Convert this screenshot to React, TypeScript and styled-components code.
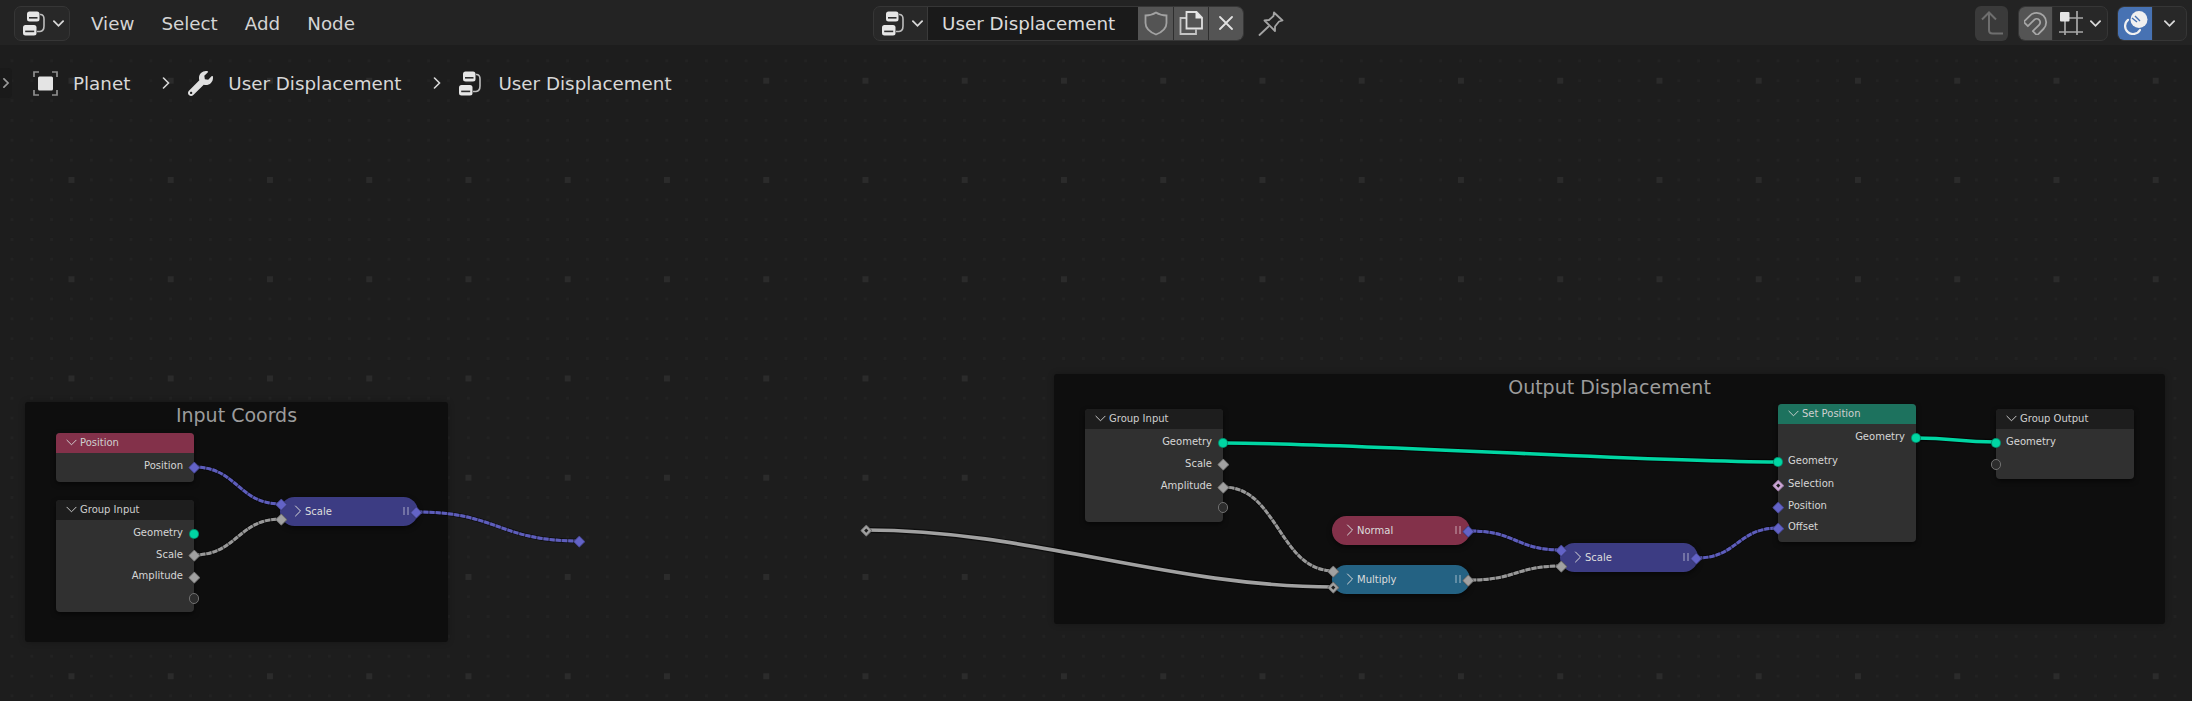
import React, { FunctionComponent } from 'react'
import styled, { createGlobalStyle } from 'styled-components'
import { FaWrench } from 'react-icons/fa'

const GlobalStyle = createGlobalStyle`
  * {
    box-sizing: border-box;
  }
  html, body, #root {
    margin: 0;
    height: 100%;
    background: #1d1d1d;
  }
  body {
    font-family: "DejaVu Sans", "Liberation Sans", sans-serif;
    overflow: hidden;
  }
`

const HEADER_HEIGHT = 45

const Editor = styled.div`
  display: flex;
  flex-direction: column;
  height: 701px;
  width: 2192px;
  overflow: hidden;
`

/* ---- top bar ---- */

const Header = styled.header`
  flex: 0 0 ${HEADER_HEIGHT}px;
  display: flex;
  align-items: center;
  padding: 1px 5px 0 14px;
  background: #232323;
  color: #d4d4d4;
  font-size: 18.3px;
`

const LeftSection = styled.div`
  flex: 0 0 859px;
  display: flex;
  align-items: center;
`

const RightSection = styled.div`
  margin-left: auto;
  display: flex;
  align-items: center;
  gap: 9px;
`

const Group = styled.div`
  display: flex;
  align-items: stretch;
  height: 35px;
  border: 1px solid #363636;
  border-radius: 7px;
  background: #282828;
  overflow: hidden;
`

const EditorType = styled(Group)`
  flex: 0 0 56px;
  align-items: center;
  padding-left: 8px;
  gap: 6px;
`

const Menu = styled.nav`
  display: flex;
  gap: 27px;
  margin-left: 21px;
`

const TreeSelect = styled.div`
  display: flex;
  align-items: center;
  gap: 6px;
  padding-left: 8px;
  width: 54px;
  border-right: 1px solid #3a3a3a;
`

const NameField = styled.div`
  width: 210px;
  padding-left: 14px;
  display: flex;
  align-items: center;
  background: #1a1a1a;
  color: #dcdcdc;
`

const ToolButton = styled.div<{ $bg?: string; $w?: number }>`
  flex: 0 0 ${p => p.$w ?? 35}px;
  display: flex;
  align-items: center;
  justify-content: center;
  gap: 7px;
  background: ${p => p.$bg ?? 'transparent'};
  & + & {
    border-left: 1px solid #2e2e2e;
  }
`

const PinButton = styled.div`
  margin-left: 14px;
  display: flex;
`

const UpButton = styled.div`
  width: 33px;
  height: 35px;
  margin-right: 1px;
  display: flex;
  align-items: center;
  justify-content: center;
  border-radius: 6px;
  background: #3a3a3a;
`

const Icon = styled.svg`
  display: block;
  flex: none;
  fill: none;
`

/* ---- canvas ---- */

const Canvas = styled.main`
  position: relative;
  flex: 1;
  overflow: hidden;
  background: #1d1d1d;
`

const GridDots = styled.div<{ $step: number; $size: number; $color: string; $ox: number; $oy: number }>`
  position: absolute;
  inset: 0;
  background: linear-gradient(
    90deg,
    ${p => p.$color} 0 ${p => p.$size}px,
    transparent ${p => p.$size}px
  );
  background-position: ${p => p.$ox}px 0;
  background-size: ${p => p.$step}px 100%;
  mask-image: linear-gradient(
    180deg,
    #000 0 ${p => p.$size}px,
    transparent ${p => p.$size}px
  );
  mask-position: 0 ${p => p.$oy}px;
  mask-size: 100% ${p => p.$step}px;
`

const Breadcrumbs = styled.div`
  position: relative;
  z-index: 3;
  height: 76px;
  display: flex;
  align-items: center;
  color: #d8d8d8;
  font-size: 18.3px;
`

const CrumbTab = styled.div`
  width: 12px;
  height: 30px;
  margin-right: 21px;
  display: flex;
  align-items: center;
  justify-content: center;
  background: #1a1a1a;
  border-radius: 0 4px 4px 0;
`

const Crumb = styled.div`
  display: flex;
  align-items: center;
  gap: 15px;
`

const CrumbSep = styled.div`
  margin: 0 16px 0 30px;
`

const Frame = styled.section<{ $x: number; $y: number; $w: number; $h: number }>`
  position: absolute;
  left: ${p => p.$x}px;
  top: ${p => p.$y}px;
  width: ${p => p.$w}px;
  height: ${p => p.$h}px;
  background: #0e0e0e;
  border-radius: 3px;
  box-shadow: 0 0 6px rgba(0, 0, 0, 0.25);
  color: #9c9c9c;
  font-size: 19px;
  line-height: 24px;
  text-align: center;
  padding-top: 1px;
`

const Links = styled.svg`
  position: absolute;
  left: 0;
  top: 0;
  z-index: 1;
`

const Node = styled.article<{ $x: number; $y: number; $w?: number; $h: number }>`
  position: absolute;
  z-index: 2;
  left: ${p => p.$x}px;
  top: ${p => p.$y}px;
  width: ${p => p.$w ?? 138}px;
  height: ${p => p.$h}px;
  background: #303030;
  border-radius: 4px;
  box-shadow: 0 2px 5px rgba(0, 0, 0, 0.55);
  color: #d6d6d6;
  font-size: 10px;
`

const NodeTitle = styled.div<{ $bg?: string }>`
  height: 20px;
  display: flex;
  align-items: center;
  gap: 3px;
  padding: 0 0 2px 10px;
  background: ${p => p.$bg ?? '#1d1d1d'};
  border-radius: 4px 4px 0 0;
  color: #cfcfcf;
`

const NodeBody = styled.div`
  padding-top: 3px;
`

const Row = styled.div<{ $output?: boolean; $gap?: number }>`
  position: relative;
  height: 21.6px;
  margin-top: ${p => p.$gap ?? 0}px;
  display: flex;
  align-items: center;
  justify-content: ${p => (p.$output ? 'flex-end' : 'flex-start')};
  padding: 0 ${p => (p.$output ? 11 : 0)}px 2px ${p => (p.$output ? 0 : 10)}px;
`

const Collapsed = styled.article<{ $x: number; $y: number; $bg: string }>`
  position: absolute;
  z-index: 2;
  left: ${p => p.$x}px;
  top: ${p => p.$y}px;
  width: 138px;
  height: 29px;
  display: flex;
  align-items: center;
  gap: 1px;
  padding: 0 9px 1px 12px;
  background: ${p => p.$bg};
  border-radius: 14.5px;
  box-shadow: 0 2px 5px rgba(0, 0, 0, 0.55);
  color: #dcdcdc;
  font-size: 10px;
`

const HideBars = styled.span`
  margin-left: auto;
  width: 6px;
  height: 8px;
  border-left: 2px solid rgba(255, 255, 255, 0.28);
  border-right: 2px solid rgba(255, 255, 255, 0.28);
`

const Socket = styled.i<{ $color?: string; $round?: boolean; $hollow?: boolean; $dot?: boolean }>`
  position: absolute;
  display: block;
  width: ${p => (p.$round ? 10.5 : 8.5)}px;
  height: ${p => (p.$round ? 10.5 : 8.5)}px;
  margin: ${p => (p.$round ? -5.25 : -4.25)}px;
  background: ${p => (p.$hollow ? '#2c2c2c' : p.$color ?? '#a1a1a1')};
  border: ${p => (p.$hollow ? '1px solid #707070' : '0.5px solid rgba(0, 0, 0, 0.3)')};
  border-radius: ${p => (p.$round ? '50%' : '1.5px')};
  transform: ${p => (p.$round ? 'none' : 'rotate(45deg)')};
  z-index: 3;
  &::after {
    content: '';
    display: ${p => (p.$dot ? 'block' : 'none')};
    width: 2.5px;
    height: 2.5px;
    margin: 2.25px;
    background: #1c1c1c;
  }
`

const RowSocket = styled(Socket)<{ $output?: boolean }>`
  top: 50%;
  left: ${p => (p.$output ? '100%' : '0')};
`

const EdgeSocket = styled(Socket)<{ $output?: boolean; $top: number }>`
  top: ${p => p.$top}px;
  left: ${p => (p.$output ? '136px' : '1px')};
`

const FreeSocket = styled(Socket)<{ $x: number; $y: number }>`
  left: ${p => p.$x}px;
  top: ${p => p.$y}px;
`

/* ---- drawings ---- */

const Chevron: FunctionComponent<{ dir?: 'down' | 'right'; size?: number; color?: string; weight?: number }> = ({
  dir = 'down',
  size = 11,
  color = '#d8d8d8',
  weight = 2,
}) => (
  <Icon width={size} height={size} viewBox="0 0 12 12" stroke={color} strokeWidth={weight} strokeLinecap="round">
    <path d={dir === 'down' ? 'M1 3.5 L6 8.5 L11 3.5' : 'M3.5 1 L8.5 6 L3.5 11'} />
  </Icon>
)

const NodeTreeIcon: FunctionComponent = () => (
  <Icon width="24" height="25" viewBox="0 0 24 25">
    <path d="M17 3.5 H18 Q21 4 21 8 V15 Q21 20 17 20.5 H14" stroke="#bdbdbd" strokeWidth="1.6" />
    <rect x="4" y="0.5" width="12.5" height="10" rx="2.5" fill="#e6e6e6" />
    <rect x="6" y="6" width="8.5" height="1.6" fill="#303030" />
    <rect x="0" y="14" width="13.5" height="10.5" rx="2.5" fill="#e6e6e6" />
    <rect x="2.2" y="19.6" width="9" height="1.6" fill="#303030" />
  </Icon>
)

const ObjectIcon: FunctionComponent = () => (
  <Icon width="25" height="25" viewBox="0 0 25 25">
    <path
      d="M6 1 H1 V6 M19 1 H24 V6 M6 24 H1 V19 M19 24 H24 V19"
      stroke="#8f8f8f"
      strokeWidth="1.7"
    />
    <rect x="5" y="5.5" width="15" height="14" rx="1.5" fill="#e4e4e4" />
  </Icon>
)

const ShieldIcon: FunctionComponent = () => (
  <Icon width="24" height="25" viewBox="0 0 24 25" stroke="#a2a2a2" strokeWidth="1.8">
    <path d="M12 1.5 C8.5 3.8 5 4.5 1.5 4.5 V12 C1.5 18 7 21.5 12 23.5 C17 21.5 22.5 18 22.5 12 V4.5 C19 4.5 15.5 3.8 12 1.5 Z" />
  </Icon>
)

const CopyIcon: FunctionComponent = () => (
  <Icon width="24" height="24" viewBox="0 0 24 24">
    <path d="M7 7 H1.5 V23 H17 V18.5" stroke="#c4c4c4" strokeWidth="1.8" />
    <path d="M7.5 1 H17.5 L23 6.5 V17.5 H7.5 Z" stroke="#e0e0e0" strokeWidth="1.8" />
    <path d="M16.5 0.5 L23.5 7.5 H16.5 Z" fill="#e8e8e8" />
  </Icon>
)

const CloseIcon: FunctionComponent = () => (
  <Icon width="14" height="14" viewBox="0 0 14 14" stroke="#e2e2e2" strokeWidth="1.8" strokeLinecap="round">
    <path d="M1 1 L13 13 M13 1 L1 13" />
  </Icon>
)

const PinIcon: FunctionComponent = () => (
  <Icon width="26" height="25" viewBox="0 0 26 25" stroke="#a4a4a4" strokeWidth="1.8" strokeLinejoin="round">
    <path d="M16 1.5 L24.5 9.5 L21 10.5 L17 15.5 L17 20 L6.5 9.5 L11 9 L15.5 5 Z" />
    <path d="M10.5 15.5 L1.5 24" strokeLinecap="round" />
  </Icon>
)

const UpIcon: FunctionComponent = () => (
  <Icon width="24" height="24" viewBox="0 0 24 24" stroke="#6e6e6e" strokeWidth="2">
    <path d="M2 8.5 L9 1.5 L16 8.5 M9 2 V19 Q9 22.5 12.5 22.5 H23" />
  </Icon>
)

const MagnetIcon: FunctionComponent = () => (
  <Icon width="24" height="24" viewBox="0 0 24 24" stroke="#a6a6a6" strokeWidth="1.8" strokeLinejoin="round">
    <path
      transform="rotate(45 12 12)"
      d="M2.5 20 V11 A9.5 9.5 0 0 1 21.5 11 V20 H15.5 V11 A3.5 3.5 0 0 0 8.5 11 V20 Z"
    />
  </Icon>
)

const SnapIcon: FunctionComponent = () => (
  <Icon width="24" height="24" viewBox="0 0 24 24">
    <path d="M0 21 H24 M18 0 V24 M6 10 V24 M10 7 H24" stroke="#a8a8a8" strokeWidth="1.7" />
    <rect x="1" y="1" width="9.5" height="9.5" rx="1" fill="#e4e4e4" />
  </Icon>
)

const OverlayIcon: FunctionComponent = () => (
  <Icon width="26" height="24" viewBox="0 0 26 24">
    <circle cx="17" cy="8.5" r="8.5" fill="#f0f0f0" />
    <path d="M10 7 L15 11 M13 5 L18 10" stroke="#4772b3" strokeWidth="1.4" />
    <path d="M6 8.8 A 8 8 0 1 0 18 19" stroke="#f0f0f0" strokeWidth="2.2" strokeLinecap="round" />
  </Icon>
)

/* ---- links, page coordinates ---- */

type Link = { from: [number, number]; to: [number, number]; color: string; dashed?: boolean; bend?: number }

const BLUE = '#6363c7'
const GREY = '#a1a1a1'
const TEAL = '#00d6a3'

const LINKS: Link[] = [
  { from: [194, 467], to: [281, 504], color: BLUE, dashed: true },
  { from: [194, 555], to: [281, 519], color: GREY, dashed: true },
  { from: [417, 512], to: [579, 541], color: BLUE, dashed: true },
  { from: [866, 530], to: [1334, 587], color: GREY, bend: 0.35 },
  { from: [1223, 443], to: [1778, 462], color: TEAL, bend: 0.25 },
  { from: [1223, 487], to: [1334, 571], color: GREY, dashed: true },
  { from: [1471, 531], to: [1561, 550], color: BLUE, dashed: true },
  { from: [1471, 580], to: [1561, 566], color: GREY, dashed: true },
  { from: [1697, 558], to: [1778, 528], color: BLUE, dashed: true },
  { from: [1916, 438], to: [1996, 442], color: TEAL },
]

const linkPath = ({ from, to, bend = 0.5 }: Link) => {
  const d = (to[0] - from[0]) * bend
  return `M${from[0]} ${from[1]} C${from[0] + d} ${from[1]} ${to[0] - d} ${to[1]} ${to[0]} ${to[1]}`
}

const App: FunctionComponent = () => {
  return (
    <Editor>
      <GlobalStyle />
      <Header>
        <LeftSection>
          <EditorType>
            <NodeTreeIcon />
            <Chevron />
          </EditorType>
          <Menu>
            <span>View</span>
            <span>Select</span>
            <span>Add</span>
            <span>Node</span>
          </Menu>
        </LeftSection>

        <Group>
          <TreeSelect>
            <NodeTreeIcon />
            <Chevron />
          </TreeSelect>
          <NameField>User Displacement</NameField>
          <ToolButton $bg="#545454">
            <ShieldIcon />
          </ToolButton>
          <ToolButton $bg="#545454">
            <CopyIcon />
          </ToolButton>
          <ToolButton $bg="#545454">
            <CloseIcon />
          </ToolButton>
        </Group>
        <PinButton>
          <PinIcon />
        </PinButton>

        <RightSection>
          <UpButton>
            <UpIcon />
          </UpButton>
          <Group>
            <ToolButton $bg="#545454" $w={33}>
              <MagnetIcon />
            </ToolButton>
            <ToolButton $w={55}>
              <SnapIcon />
              <Chevron />
            </ToolButton>
          </Group>
          <Group>
            <ToolButton $bg="#4772b3" $w={34}>
              <OverlayIcon />
            </ToolButton>
            <ToolButton $w={34}>
              <Chevron />
            </ToolButton>
          </Group>
        </RightSection>
      </Header>

      <Canvas>
        <GridDots $step={19.85} $size={3} $color="#222222" $ox={10.45} $oy={14.4} />
        <GridDots $step={99.25} $size={6} $color="#2b2b2b" $ox={68.5} $oy={32.75} />

        <Breadcrumbs>
          <CrumbTab>
            <Chevron dir="right" size={10} color="#9a9a9a" />
          </CrumbTab>
          <Crumb>
            <ObjectIcon />
            Planet
          </Crumb>
          <CrumbSep>
            <Chevron dir="right" size={12} weight={1.6} />
          </CrumbSep>
          <Crumb>
            <FaWrench size={25} color="#e0e0e0" />
            User Displacement
          </Crumb>
          <CrumbSep>
            <Chevron dir="right" size={12} weight={1.6} />
          </CrumbSep>
          <Crumb>
            <NodeTreeIcon />
            User Displacement
          </Crumb>
        </Breadcrumbs>

        <Frame $x={25} $y={357} $w={423} $h={240}>
          Input Coords
        </Frame>
        <Frame $x={1054} $y={329} $w={1111} $h={250}>
          Output Displacement
        </Frame>

        <Links width="2192" height="656" viewBox={`0 ${HEADER_HEIGHT} 2192 656`} fill="none">
          {LINKS.map((link, i) => (
            <g key={i}>
              <path d={linkPath(link)} stroke="rgba(0,0,0,0.55)" strokeWidth={link.dashed ? 4.5 : 6} />
              {link.dashed && <path d={linkPath(link)} stroke={link.color} strokeOpacity={0.45} strokeWidth={3} />}
              <path
                d={linkPath(link)}
                stroke={link.color}
                strokeOpacity={link.dashed ? 0.9 : 1}
                strokeWidth={link.dashed ? 3 : 3.6}
                strokeDasharray={link.dashed ? '5 1.2' : undefined}
              />
            </g>
          ))}
        </Links>

        <Node $x={56} $y={388} $h={49}>
          <NodeTitle $bg="#83314a">
            <Chevron size={11} weight={1} />
            Position
          </NodeTitle>
          <NodeBody>
            <Row $output>
              Position
              <RowSocket $output $color={BLUE} />
            </Row>
          </NodeBody>
        </Node>

        <Node $x={56} $y={455} $h={112}>
          <NodeTitle>
            <Chevron size={11} weight={1} />
            Group Input
          </NodeTitle>
          <NodeBody>
            <Row $output>
              Geometry
              <RowSocket $output $round $color={TEAL} />
            </Row>
            <Row $output>
              Scale
              <RowSocket $output />
            </Row>
            <Row $output>
              Amplitude
              <RowSocket $output />
            </Row>
            <Row $output>
              <RowSocket $output $round $hollow />
            </Row>
          </NodeBody>
        </Node>

        <Collapsed $x={280} $y={452} $bg="#3c3c83">
          <Chevron dir="right" size={12} weight={1} />
          Scale
          <HideBars />
          <EdgeSocket $top={7} $color={BLUE} />
          <EdgeSocket $top={22} />
          <EdgeSocket $output $top={15} $color={BLUE} />
        </Collapsed>

        <FreeSocket $x={579} $y={496} $color={BLUE} />
        <FreeSocket $x={866} $y={485} $dot />

        <Node $x={1085} $y={364} $h={113}>
          <NodeTitle>
            <Chevron size={11} weight={1} />
            Group Input
          </NodeTitle>
          <NodeBody>
            <Row $output>
              Geometry
              <RowSocket $output $round $color={TEAL} />
            </Row>
            <Row $output>
              Scale
              <RowSocket $output />
            </Row>
            <Row $output $gap={1}>
              Amplitude
              <RowSocket $output />
            </Row>
            <Row $output $gap={-1}>
              <RowSocket $output $round $hollow />
            </Row>
          </NodeBody>
        </Node>

        <Collapsed $x={1332} $y={471} $bg="#83314a">
          <Chevron dir="right" size={12} weight={1} />
          Normal
          <HideBars />
          <EdgeSocket $output $top={15} $color={BLUE} />
        </Collapsed>

        <Collapsed $x={1332} $y={520} $bg="#246283">
          <Chevron dir="right" size={12} weight={1} />
          Multiply
          <HideBars />
          <EdgeSocket $top={6} />
          <EdgeSocket $top={22} $dot />
          <EdgeSocket $output $top={15} />
        </Collapsed>

        <Collapsed $x={1560} $y={498} $bg="#3c3c83">
          <Chevron dir="right" size={12} weight={1} />
          Scale
          <HideBars />
          <EdgeSocket $top={7} $color={BLUE} />
          <EdgeSocket $top={23} />
          <EdgeSocket $output $top={15} $color={BLUE} />
        </Collapsed>

        <Node $x={1778} $y={359} $h={138}>
          <NodeTitle $bg="#1d725e">
            <Chevron size={11} weight={1} />
            Set Position
          </NodeTitle>
          <NodeBody>
            <Row $output>
              Geometry
              <RowSocket $output $round $color={TEAL} />
            </Row>
            <Row $gap={2.5}>
              <RowSocket $round $color={TEAL} />
              Geometry
            </Row>
            <Row $gap={1.5}>
              <RowSocket $color="#cca6d6" $dot />
              Selection
            </Row>
            <Row $gap={0.4}>
              <RowSocket $color={BLUE} />
              Position
            </Row>
            <Row $gap={-0.6}>
              <RowSocket $color={BLUE} />
              Offset
            </Row>
          </NodeBody>
        </Node>

        <Node $x={1996} $y={364} $h={70}>
          <NodeTitle>
            <Chevron size={11} weight={1} />
            Group Output
          </NodeTitle>
          <NodeBody>
            <Row>
              <RowSocket $round $color={TEAL} />
              Geometry
            </Row>
            <Row>
              <RowSocket $round $hollow />
            </Row>
          </NodeBody>
        </Node>
      </Canvas>
    </Editor>
  )
}

export default App
